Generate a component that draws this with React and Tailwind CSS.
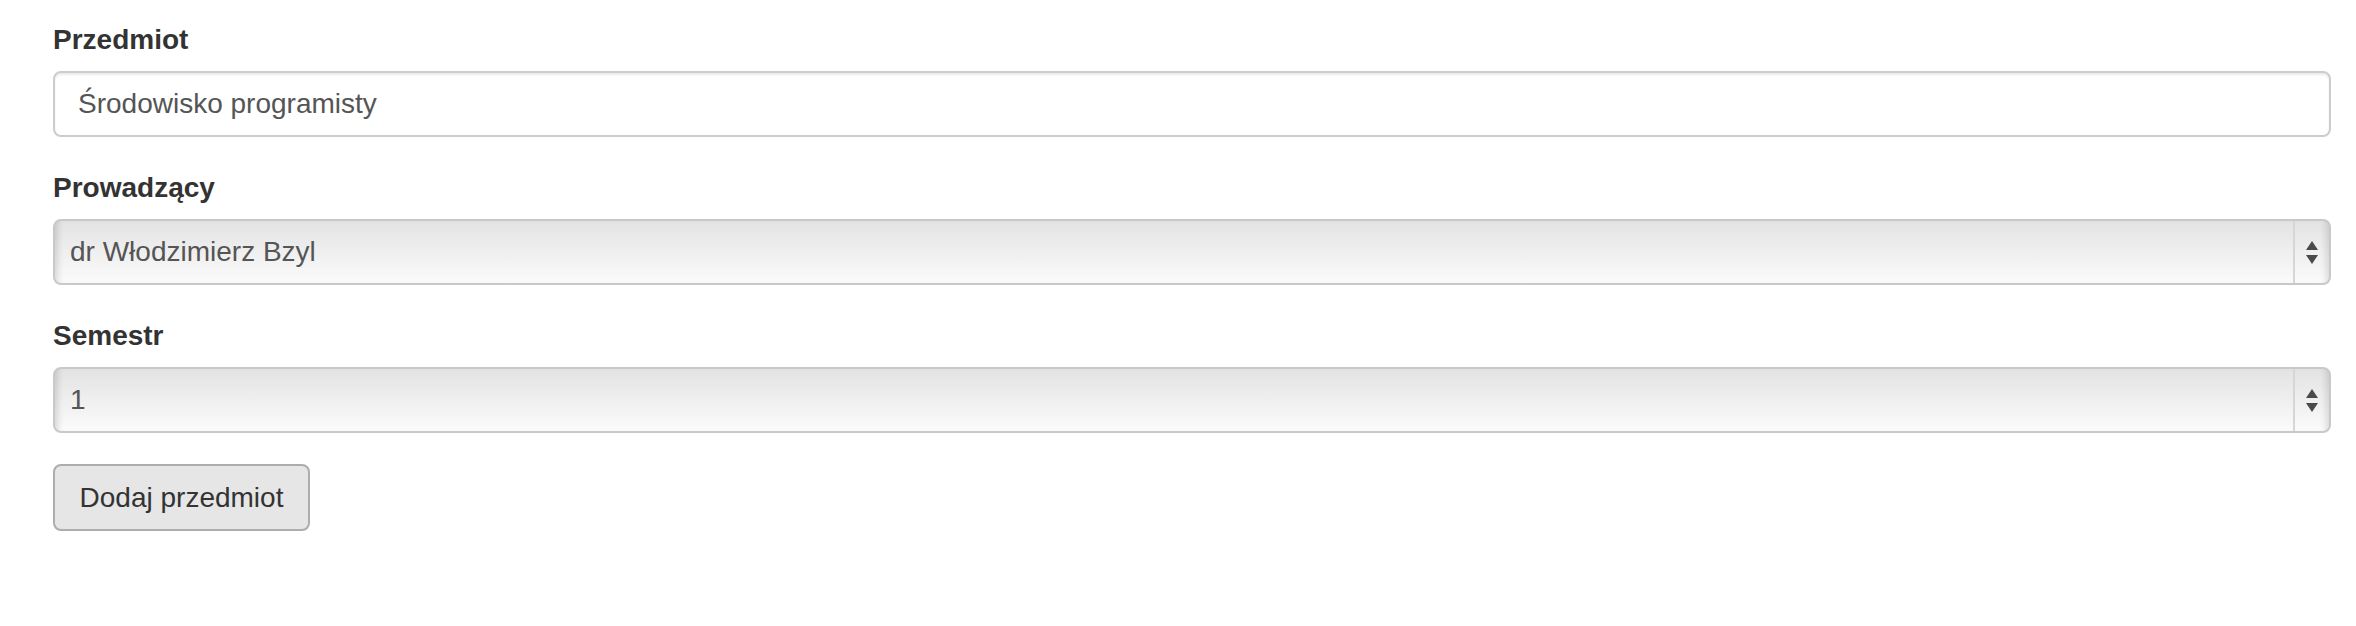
const FONT = { fontFamily: '"Liberation Sans", Arial, Helvetica, sans-serif' };

function Label({ children }) {
  return <label className="block h-[40px] leading-[40px] mb-[11px] text-[28px] font-bold text-[#333]">{children}</label>;
}

function FakeSelect({ value }) {
  return (
    <div className="flex h-[66px] rounded-[8px] border-2 border-[#c9c9c9] bg-linear-to-b from-[#e3e3e3] to-[#fbfbfb] overflow-hidden">
      <div className="flex-1 flex items-center pl-[15px] text-[28px] text-[#555] shadow-[inset_7px_0_6px_-4px_rgba(0,0,0,0.13)]">
        {value}
      </div>
      <div className="w-[36px] flex items-center justify-center border-l-2 border-[#d6d6d6] shadow-[inset_-7px_0_6px_-4px_rgba(0,0,0,0.12)]">
        <svg width="12" height="23" viewBox="0 0 12 23">
          <polygon points="6,0 12,9 0,9" fill="#4a4a4a" />
          <polygon points="0,14 12,14 6,23" fill="#4a4a4a" />
        </svg>
      </div>
    </div>
  );
}

export default function App() {
  return (
    <div className="min-h-[626px] bg-white pt-[20px] pl-[53px] pr-[25px]" style={FONT}>
      {/* Przedmiot */}
      <div className="mb-[31px]">
        <Label>Przedmiot</Label>
        <div className="h-[66px] rounded-[8px] border-2 border-[#cccccc] bg-white flex items-center pl-[23px] text-[28px] text-[#555] shadow-[inset_0_2px_2px_rgba(0,0,0,0.075)]">
          Środowisko programisty
        </div>
      </div>

      {/* Prowadzący */}
      <div className="mb-[31px]">
        <Label>Prowadzący</Label>
        <FakeSelect value="dr Włodzimierz Bzyl" />
      </div>

      {/* Semestr */}
      <div className="mb-[31px]">
        <Label>Semestr</Label>
        <FakeSelect value="1" />
      </div>

      <button className="w-[257px] h-[67px] rounded-[8px] border-2 border-[#adadad] bg-[#e6e6e6] text-[28px] text-[#333] flex items-center justify-center">
        Dodaj przedmiot
      </button>
    </div>
  );
}
